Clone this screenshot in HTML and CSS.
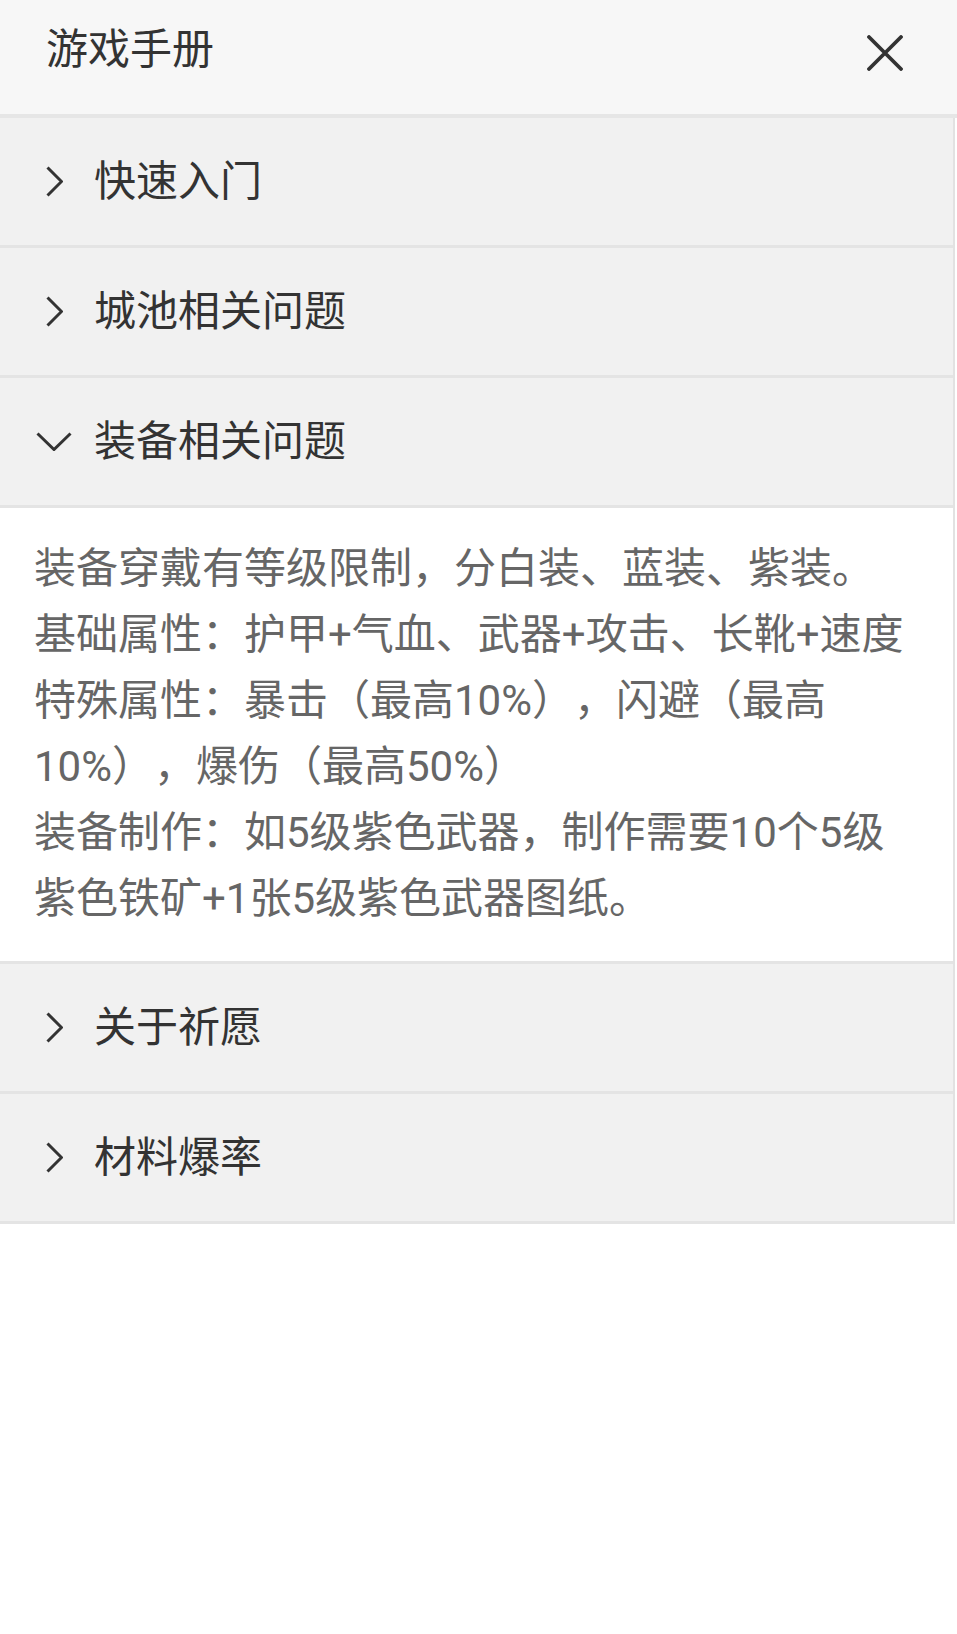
FILE: index.html
```html
<!DOCTYPE html>
<html lang="zh-CN">
<head>
<meta charset="utf-8">
<title>游戏手册</title>
<link rel="stylesheet" href="styles.css">
</head>
<body>
<div class="page">
  <header class="top">
    <h1 class="top-title">游戏手册</h1>
    <button class="close" aria-label="关闭">
      <svg viewBox="0 0 36 36" width="36" height="36"><path d="M2 2 L34 34 M34 2 L2 34" stroke="#333" stroke-width="3.8" stroke-linecap="round" fill="none"/></svg>
    </button>
  </header>
  <div class="accordion">
    <div class="item">
      <div class="item-head">
        <span class="chev"><svg viewBox="0 0 17 31" width="17" height="31"><polyline points="1.5,1.5 15.5,15.5 1.5,29.5" fill="none" stroke="#333" stroke-width="3"/></svg></span>
        <span class="item-title">快速入门</span>
      </div>
    </div>
    <div class="item">
      <div class="item-head">
        <span class="chev"><svg viewBox="0 0 17 31" width="17" height="31"><polyline points="1.5,1.5 15.5,15.5 1.5,29.5" fill="none" stroke="#333" stroke-width="3"/></svg></span>
        <span class="item-title">城池相关问题</span>
      </div>
    </div>
    <div class="item open">
      <div class="item-head">
        <span class="chev chev-down"><svg viewBox="0 0 36 19" width="36" height="19"><polyline points="1.5,1.5 18,17.5 34.5,1.5" fill="none" stroke="#333" stroke-width="3"/></svg></span>
        <span class="item-title">装备相关问题</span>
      </div>
      <div class="item-body">
        <p class="line">装备穿戴有等级限制，分白装、蓝装、紫装。</p>
        <p class="line">基础属性：护甲+气血、武器+攻击、长靴+速度</p>
        <p class="line">特殊属性：暴击（最高10%），闪避（最高</p>
        <p class="line">10%），爆伤（最高50%）</p>
        <p class="line">装备制作：如5级紫色武器，制作需要10个5级</p>
        <p class="line">紫色铁矿+1张5级紫色武器图纸。</p>
      </div>
    </div>
    <div class="item">
      <div class="item-head">
        <span class="chev"><svg viewBox="0 0 17 31" width="17" height="31"><polyline points="1.5,1.5 15.5,15.5 1.5,29.5" fill="none" stroke="#333" stroke-width="3"/></svg></span>
        <span class="item-title">关于祈愿</span>
      </div>
    </div>
    <div class="item">
      <div class="item-head">
        <span class="chev"><svg viewBox="0 0 17 31" width="17" height="31"><polyline points="1.5,1.5 15.5,15.5 1.5,29.5" fill="none" stroke="#333" stroke-width="3"/></svg></span>
        <span class="item-title">材料爆率</span>
      </div>
    </div>
  </div>
</div>
</body>
</html>
```

FILE: styles.css
```css
html, body {
  margin: 0;
  padding: 0;
  background: #ffffff;
}
body {
  font-family: "Noto Sans CJK SC", "Noto Sans", sans-serif;
  color: #333333;
  text-spacing-trim: space-all;
}
.page {
  width: 957px;
}
.top {
  height: 118px;
  background: #f7f7f7;
  display: flex;
  justify-content: space-between;
  align-items: flex-start;
  padding: 0 54px 0 46px;
  box-sizing: border-box;
  border-bottom: 4px solid #e6e6e6;
}
.top-title {
  margin: 17px 0 0 0;
  font-size: 42px;
  line-height: 58px;
  font-weight: normal;
  color: #333333;
}
.close {
  margin-top: 35px;
  padding: 0;
  border: 0;
  background: none;
  width: 36px;
  height: 36px;
  display: block;
}
.close svg {
  display: block;
}
.accordion {
  width: 955px;
  box-sizing: border-box;
  border-right: 2px solid #e2e2e2;
}
.item {
  border-bottom: 3px solid #e4e4e4;
}
.item-head {
  height: 127px;
  background: #f1f1f1;
  display: flex;
  align-items: center;
  padding-left: 46px;
}
.chev {
  width: 17px;
  height: 31px;
  display: flex;
  align-items: center;
  margin-right: 31px;
}
.chev svg {
  display: block;
}
.chev-down {
  width: 36px;
  height: 19px;
  margin-left: -10px;
  margin-right: 22px;
}
.item-title {
  font-size: 42px;
  line-height: 58px;
  color: #333333;
  margin-bottom: 8px;
}
.item.open .item-head {
  border-bottom: 3px solid #e4e4e4;
}
.item-body {
  background: #ffffff;
  padding: 28px 0 29px 34px;
}
.line {
  margin: 0;
  font-family: Roboto, "Noto Sans CJK SC", sans-serif;
  font-size: 42px;
  line-height: 66px;
  color: #666666;
  white-space: nowrap;
}
```
